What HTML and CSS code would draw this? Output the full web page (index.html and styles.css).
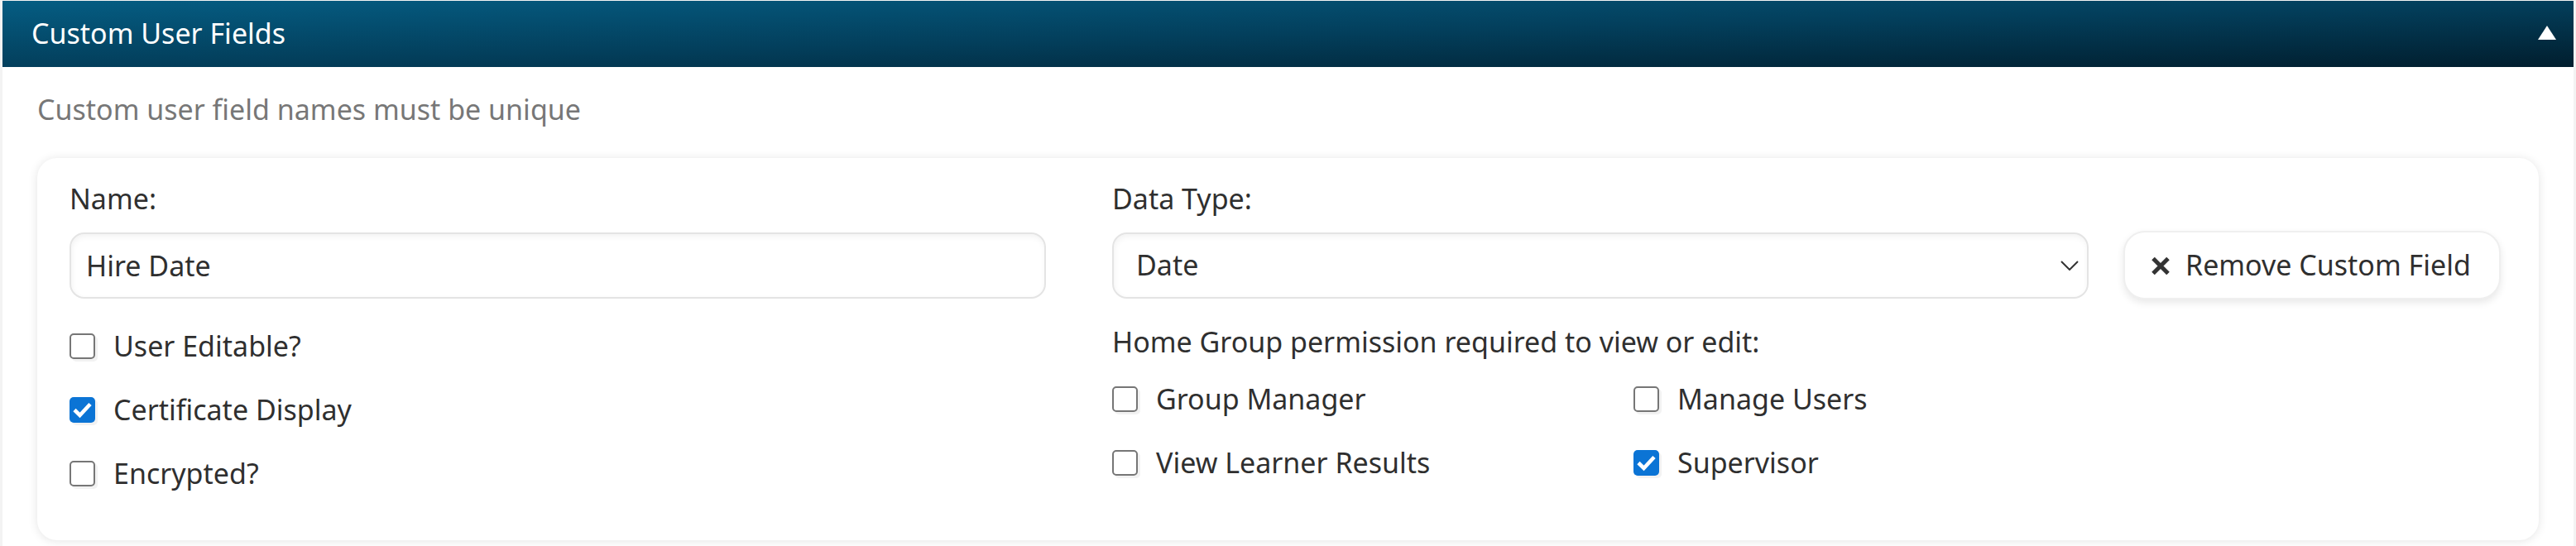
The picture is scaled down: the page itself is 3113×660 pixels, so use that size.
FILE: index.html
```html
<!DOCTYPE html>
<html lang="en">
<head>
<meta charset="utf-8">
<title>Custom User Fields</title>
<link rel="stylesheet" href="styles.css">
</head>
<body>
<section class="panel">
  <header class="panel-head">
    <h2 class="panel-title">Custom User Fields</h2>
    <svg class="collapse-icon" width="22" height="17" viewBox="0 0 22 17"><polygon points="11,0 22,17 0,17" fill="#fff"/></svg>
  </header>
  <div class="panel-body">
    <p class="hint">Custom user field names must be unique</p>
    <div class="card">
      <div class="field-row">
        <div class="col-left">
          <div class="field-label">Name:</div>
          <div class="text-input">Hire Date</div>
          <div class="checks">
            <div class="check-item"><span class="cb"></span><span class="check-text">User Editable?</span></div>
            <div class="check-item"><span class="cb checked"><svg width="31" height="31" viewBox="0 0 31 31"><path d="M6 15.5 L12.5 22 L25 8.5" fill="none" stroke="#fff" stroke-width="4.6"/></svg></span><span class="check-text">Certificate Display</span></div>
            <div class="check-item"><span class="cb"></span><span class="check-text">Encrypted?</span></div>
          </div>
        </div>
        <div class="col-right">
          <div class="field-label">Data Type:</div>
          <div class="select-row">
            <div class="select">
              <span>Date</span>
              <svg class="chevron" width="22" height="12" viewBox="0 0 22 12"><polyline points="1,1 11,11 21,1" fill="none" stroke="#333" stroke-width="2"/></svg>
            </div>
            <button class="remove-btn" type="button">
              <svg class="x-icon" width="22" height="21" viewBox="0 0 22 21"><path d="M2 1.5 L20 19.5 M20 1.5 L2 19.5" stroke="#333" stroke-width="5"/></svg>
              <span>Remove Custom Field</span>
            </button>
          </div>
          <div class="perm-label">Home Group permission required to view or edit:</div>
          <div class="perm-grid">
            <div class="check-item"><span class="cb"></span><span class="check-text">Group Manager</span></div>
            <div class="check-item"><span class="cb"></span><span class="check-text">Manage Users</span></div>
            <div class="check-item"><span class="cb"></span><span class="check-text">View Learner Results</span></div>
            <div class="check-item"><span class="cb checked"><svg width="31" height="31" viewBox="0 0 31 31"><path d="M6 15.5 L12.5 22 L25 8.5" fill="none" stroke="#fff" stroke-width="4.6"/></svg></span><span class="check-text">Supervisor</span></div>
          </div>
        </div>
      </div>
    </div>
  </div>
</section>
</body>
</html>
```
FILE: styles.css
```css
html, body {
  margin: 0;
  padding: 0;
}
body {
  background: #f3f3f3;
  font-family: "Noto Sans", "Open Sans", sans-serif;
  font-size: 34px;
  line-height: 51px;
  color: #2f2f2f;
  height: 660px;
  overflow: hidden;
}
.panel {
  margin: 1px 3px 0 3px;
  background: #fff;
  height: 659px;
}
.panel-head {
  height: 80px;
  background: linear-gradient(to bottom right, #055d83 0%, #033f5c 50%, #011e2e 100%);
  display: flex;
  align-items: center;
  justify-content: space-between;
  padding: 0 21px 0 35px;
}
.panel-title {
  margin: 0;
  font-size: 34px;
  font-weight: 400;
  color: #fff;
  line-height: 78px;
  padding-bottom: 2px;
}
.collapse-icon {
  margin-top: -4px;
}
.panel-body {
  padding: 0 42px;
}
.hint {
  margin: 0;
  padding-top: 26px;
  color: #777;
}
.card {
  margin-top: 33px;
  background: #fff;
  border-radius: 24px;
  box-shadow: 0 1px 12px rgba(0, 0, 0, 0.11);
  padding: 24px 49px 55px 39px;
}
.field-row {
  display: flex;
  gap: 80px;
}
.col-left {
  width: 1180px;
  flex: none;
}
.col-right {
  flex: 1;
  min-width: 0;
}
.text-input,
.select {
  box-sizing: border-box;
  height: 80px;
  border: 2px solid #e4e4e4;
  border-radius: 18px;
  box-shadow: inset 1px 3px 7px rgba(0, 0, 0, 0.05);
  background: #fff;
  display: flex;
  align-items: center;
}
.text-input {
  margin-top: 15px;
  padding-left: 18px;
}
.checks {
  margin-top: 32px;
  display: flex;
  flex-direction: column;
  gap: 26px;
}
.check-item {
  display: flex;
  align-items: center;
  gap: 22px;
  height: 51px;
  white-space: nowrap;
}
.cb {
  box-sizing: border-box;
  width: 31px;
  height: 31px;
  flex: none;
  border: 2px solid #767676;
  border-radius: 5px;
  background: #fff;
  box-shadow: 3px 3px 0 0 #f2f2f2;
  display: flex;
}
.cb.checked {
  border: none;
  background: #0b74d5;
}
.select-row {
  margin-top: 13px;
  display: flex;
  align-items: center;
  gap: 42px;
}
.select {
  width: 1180px;
  flex: none;
  padding: 0 10px 0 27px;
  justify-content: space-between;
}
.remove-btn {
  box-sizing: border-box;
  flex: none;
  white-space: nowrap;
  height: 83px;
  border: 2px solid #efefef;
  border-radius: 26px;
  background: #fff;
  box-shadow: 0 4px 10px rgba(0, 0, 0, 0.09);
  font-family: inherit;
  font-size: 34px;
  line-height: 51px;
  color: #2f2f2f;
  display: flex;
  align-items: center;
  gap: 19px;
  padding: 0 34px 0 32px;
}
.x-icon {
  flex: none;
  margin-top: 1px;
}
.perm-label {
  margin-top: 26px;
}
.perm-grid {
  margin-top: 18px;
  display: grid;
  grid-template-columns: 630px auto;
  row-gap: 26px;
}
```
